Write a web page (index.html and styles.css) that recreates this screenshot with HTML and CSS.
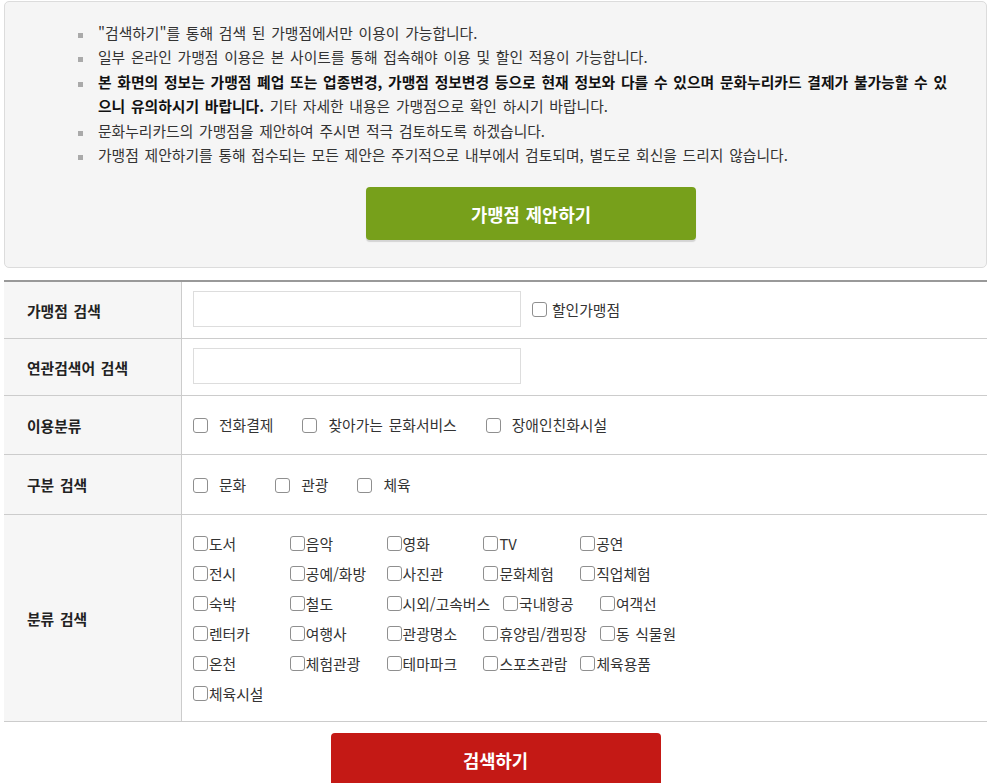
FILE: index.html
```html
<!DOCTYPE html>
<html lang="ko">
<head>
<meta charset="utf-8">
<title>가맹점 검색</title>
<link rel="stylesheet" href="styles.css">
</head>
<body>
<div class="page">
  <div class="notice">
    <ul class="notice-list">
      <li>"검색하기"를 통해 검색 된 가맹점에서만 이용이 가능합니다.</li>
      <li>일부 온라인 가맹점 이용은 본 사이트를 통해 접속해야 이용 및 할인 적용이 가능합니다.</li>
      <li><strong>본 화면의 정보는 가맹점 폐업 또는 업종변경, 가맹점 정보변경 등으로 현재 정보와 다를 수 있으며 문화누리카드 결제가 불가능할 수 있으니 유의하시기 바랍니다.</strong> 기타 자세한 내용은 가맹점으로 확인 하시기 바랍니다.</li>
      <li>문화누리카드의 가맹점을 제안하여 주시면 적극 검토하도록 하겠습니다.</li>
      <li>가맹점 제안하기를 통해 접수되는 모든 제안은 주기적으로 내부에서 검토되며, 별도로 회신을 드리지 않습니다.</li>
    </ul>
    <div class="btn-wrap">
      <a class="btn btn-green" href="#">가맹점 제안하기</a>
    </div>
  </div>

  <div class="search-table">
    <div class="row row-input">
      <div class="label">가맹점 검색</div>
      <div class="field">
        <input type="text" class="text-input">
        <label class="chk-inline"><input type="checkbox">할인가맹점</label>
      </div>
    </div>
    <div class="row row-input">
      <div class="label">연관검색어 검색</div>
      <div class="field">
        <input type="text" class="text-input">
      </div>
    </div>
    <div class="row row-chk">
      <div class="label">이용분류</div>
      <div class="field">
        <label class="chk-wide"><input type="checkbox">전화결제</label>
        <label class="chk-wide"><input type="checkbox">찾아가는 문화서비스</label>
        <label class="chk-wide"><input type="checkbox">장애인친화시설</label>
      </div>
    </div>
    <div class="row row-chk row-chk2">
      <div class="label">구분 검색</div>
      <div class="field">
        <label class="chk-wide"><input type="checkbox">문화</label>
        <label class="chk-wide"><input type="checkbox">관광</label>
        <label class="chk-wide"><input type="checkbox">체육</label>
      </div>
    </div>
    <div class="row row-cat">
      <div class="label">분류 검색</div>
      <div class="field">
        <ul class="cat-list">
          <li><label><input type="checkbox">도서</label></li>
          <li><label><input type="checkbox">음악</label></li>
          <li><label><input type="checkbox">영화</label></li>
          <li><label><input type="checkbox">TV</label></li>
          <li><label><input type="checkbox">공연</label></li>
          <li><label><input type="checkbox">전시</label></li>
          <li><label><input type="checkbox">공예/화방</label></li>
          <li><label><input type="checkbox">사진관</label></li>
          <li><label><input type="checkbox">문화체험</label></li>
          <li><label><input type="checkbox">직업체험</label></li>
          <li><label><input type="checkbox">숙박</label></li>
          <li><label><input type="checkbox">철도</label></li>
          <li><label><input type="checkbox">시외/고속버스</label></li>
          <li><label><input type="checkbox">국내항공</label></li>
          <li><label><input type="checkbox">여객선</label></li>
          <li><label><input type="checkbox">렌터카</label></li>
          <li><label><input type="checkbox">여행사</label></li>
          <li><label><input type="checkbox">관광명소</label></li>
          <li><label><input type="checkbox">휴양림/캠핑장</label></li>
          <li><label><input type="checkbox">동 식물원</label></li>
          <li><label><input type="checkbox">온천</label></li>
          <li><label><input type="checkbox">체험관광</label></li>
          <li><label><input type="checkbox">테마파크</label></li>
          <li><label><input type="checkbox">스포츠관람</label></li>
          <li><label><input type="checkbox">체육용품</label></li>
          <li><label><input type="checkbox">체육시설</label></li>
        </ul>
      </div>
    </div>
  </div>

  <div class="btn-wrap btn-search-wrap">
    <a class="btn btn-red" href="#">검색하기</a>
  </div>
</div>
</body>
</html>
```

FILE: styles.css
```css
* { box-sizing: border-box; }
html, body { margin: 0; padding: 0; background: #fff; }
body {
  font-family: "Noto Sans CJK KR", "Noto Sans", sans-serif;
  font-size: 14.8px;
  color: #333;
  word-spacing: 1.6px;
}
.page {
  padding: 0 4px;
}
.notice {
  background: #f5f5f5;
  border: 1px solid #dcdcdc;
  border-radius: 5px;
  margin-top: 1px;
  padding: 19px 22px 27px 93px;
}
.notice-list {
  list-style: none;
  margin: 0;
  padding: 0 14px 0 0;
  line-height: 24.4px;
}
.notice-list li {
  position: relative;
}
.notice-list li::before {
  content: "";
  position: absolute;
  left: -20px;
  top: 12px;
  width: 5px;
  height: 5px;
  background: #aaa;
}
.notice-list strong {
  font-weight: bold;
  color: #111;
}
.btn-wrap {
  display: flex;
  justify-content: center;
}
.notice .btn-wrap {
  margin-top: 20px;
}
.btn {
  display: flex;
  align-items: center;
  justify-content: center;
  width: 330px;
  height: 53px;
  color: #fff;
  font-weight: bold;
  font-size: 17.7px;
  word-spacing: 1px;
  text-decoration: none;
  border-radius: 4px;
}
.btn-green {
  background: #77a01b;
  box-shadow: 0 2px 1px #d4d4d4;
}
.btn-red {
  background: #c41915;
  border-radius: 4px 4px 0 0;
}
.btn-search-wrap {
  margin-top: 11px;
}

.search-table {
  margin-top: 12px;
  border-top: 2px solid #999;
}
.row {
  display: grid;
  grid-template-columns: 178px 1fr;
  border-bottom: 1px solid #ccc;
}
.label {
  background: #f6f6f6;
  border-right: 1px solid #ccc;
  padding-left: 23px;
  display: flex;
  align-items: center;
  font-weight: bold;
  color: #222;
}
.field {
  display: flex;
  align-items: center;
  padding: 10px 11px;
}
.row-input .field {
  padding-top: 9px;
  padding-bottom: 11px;
}
.text-input {
  width: 328px;
  height: 36px;
  border: 1px solid #ddd;
  background: #fff;
  margin: 0;
  padding: 0 8px;
}
input[type="checkbox"] {
  -webkit-appearance: none;
  appearance: none;
  width: 15px;
  height: 15px;
  margin: 0;
  flex: none;
  border: 1px solid #8f8f8f;
  border-radius: 3px;
  background: #fff;
}
.chk-inline {
  display: flex;
  align-items: center;
  margin-left: 11px;
}
.chk-inline input { margin-right: 5px; }
.row-chk .field {
  padding-top: 19px;
  padding-bottom: 19px;
}
.row-chk2 .field {
  padding-top: 20px;
  padding-bottom: 19px;
}
.chk-wide {
  display: flex;
  align-items: center;
  margin-right: 29px;
  line-height: 20px;
}
.chk-wide input { margin-right: 11px; }

.row-cat .field {
  padding-top: 13px;
  padding-bottom: 13px;
}
.cat-list {
  list-style: none;
  margin: 0;
  padding: 0;
  width: 540px;
  display: flex;
  flex-wrap: wrap;
}
.cat-list li {
  min-width: 83.8px;
  margin-right: 13px;
  height: 30px;
  display: flex;
  align-items: center;
}
.cat-list label {
  display: flex;
  align-items: center;
  white-space: nowrap;
}
.cat-list input { margin-right: 1px; }
```
